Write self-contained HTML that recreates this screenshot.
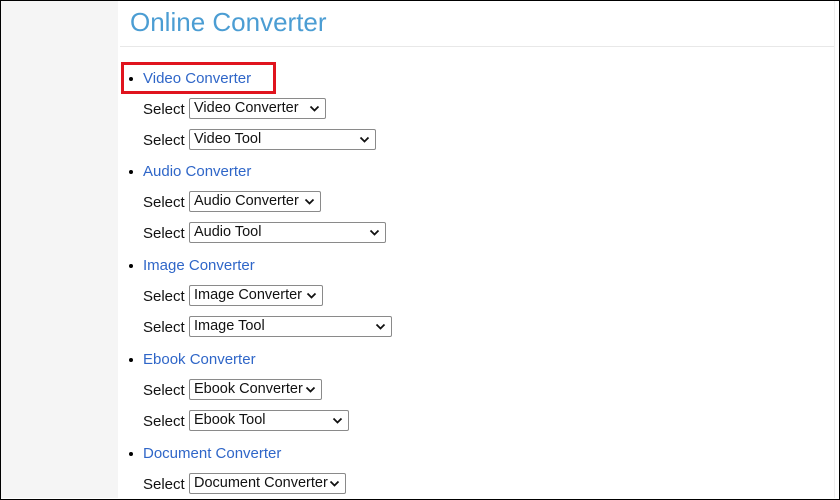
<!DOCTYPE html>
<html><head><style>
body{margin:0;width:840px;height:500px;overflow:hidden;background:#fff;font-family:"Liberation Sans",Arial,sans-serif;position:relative}
.frame{position:absolute;left:0;top:0;width:838px;height:498px;border:1px solid #000;}
.side{position:absolute;left:1px;top:1px;width:117px;height:497px;background:#f5f5f5}
.rl{position:absolute;left:834px;top:1px;width:1px;height:497px;background:#eee}
h1{position:absolute;left:130px;top:7px;margin:0;font-weight:normal;font-size:26px;color:#4b9dd3}
.hr{position:absolute;left:120px;top:46px;width:714px;height:1px;background:#e8e8e8}
.a{position:absolute;left:143px;font-size:15px;color:#2f66c8;line-height:18px}
.dot{position:absolute;left:129px;width:4px;height:4px;border-radius:50%;background:#000}
.lab{position:absolute;left:143px;font-size:15px;color:#111;line-height:18px}
.sel{position:absolute;left:189px;height:21px;border:1px solid #8a8a8a;border-radius:2px;box-sizing:border-box;font-size:14.5px;color:#111;line-height:19px;padding-left:4px;background:#fff}
.sel svg{position:absolute;right:5px;top:6px}
.red{position:absolute;left:121px;top:62px;width:149px;height:26px;border:3px solid #e0141e}
</style></head><body>
<div class="side"></div><div class="rl"></div><div class="frame"></div>
<h1>Online Converter</h1><div class="hr"></div>
<div class="red"></div>
<script>
const d=[["Video Converter",77,137,"Video Tool",187],["Audio Converter",170,132,"Audio Tool",197],["Image Converter",264,134,"Image Tool",203],["Ebook Converter",358,133,"Ebook Tool",160],["Document Converter",452,157,null,0]];
let h="";
for(const[n,y,w,t,w2] of d){
h+=`<div class="dot" style="top:${y}px"></div><div class="a" style="top:${y-7}px">${n}</div>`;
const rows=[[n,w,y+31]];if(t)rows.push([t,w2,y+62]);
for(const[s,ww,yy] of rows){h+=`<div class="lab" style="top:${yy-7}px">Select</div><div class="sel" style="top:${yy-10}px;width:${ww}px">${s}<svg width="11" height="8" viewBox="0 0 11 8"><path d="M1.5 1.5L5.5 5.5L9.5 1.5" stroke="#111" stroke-width="1.8" fill="none"/></svg></div>`;}
}
document.write(h);
</script>
</body></html>
